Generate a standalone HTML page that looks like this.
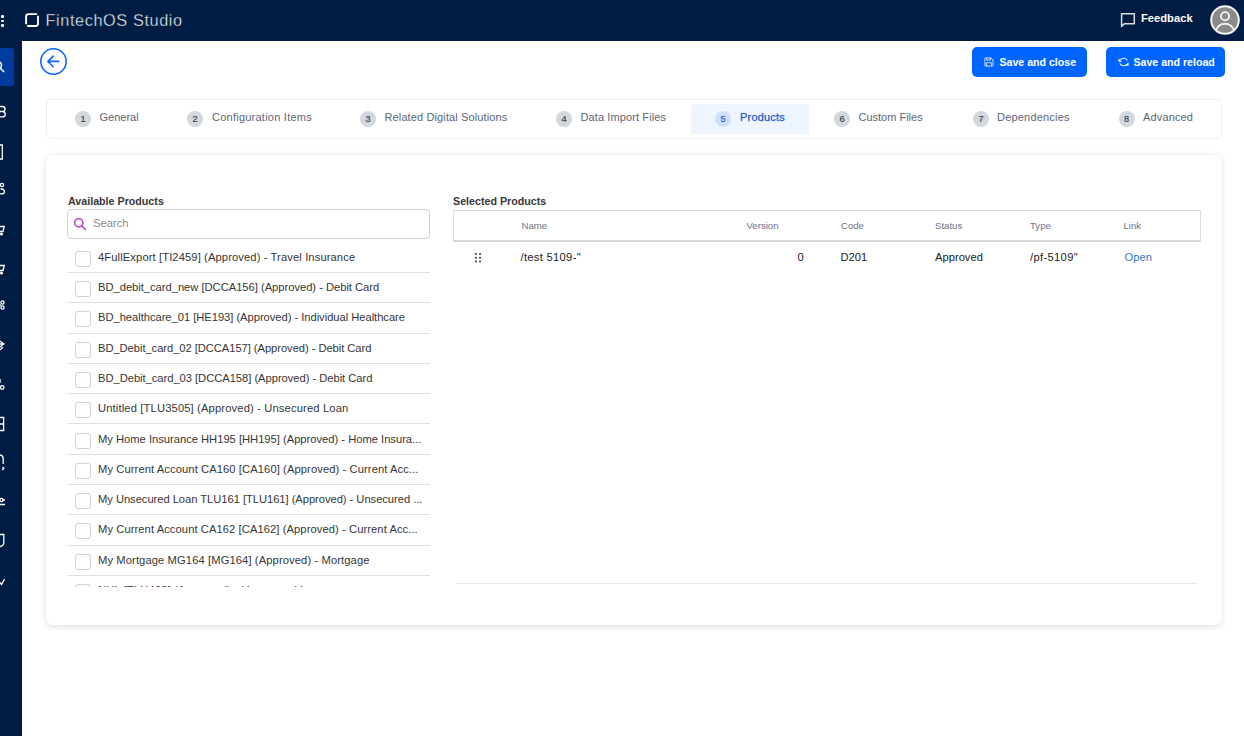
<!DOCTYPE html>
<html><head><meta charset="utf-8">
<style>
*{margin:0;padding:0;box-sizing:border-box}
html,body{width:1244px;height:736px;overflow:hidden;background:#fff;font-family:"Liberation Sans",sans-serif;position:relative}
.a{position:absolute;white-space:nowrap;line-height:1}
#hdr{position:absolute;left:0;top:0;width:1244px;height:41px;background:#001c42}
#side{position:absolute;left:0;top:41px;width:22px;height:695px;background:#001c42}
.title{left:45.5px;top:11.5px;font-size:16.3px;color:#f0f2f6;font-weight:400;letter-spacing:0.6px;-webkit-text-stroke:0.35px #001c42}
.fb{left:1141px;top:13px;font-size:11.2px;color:#fff;font-weight:700}
.btn{position:absolute;top:47px;height:30px;background:#0065ff;border-radius:5px}
.btxt{font-size:10.6px;color:#fff;font-weight:700;top:57px}
.tabs{position:absolute;left:46px;top:99px;width:1176px;height:39.5px;border:1px solid #eceef2;border-radius:5px}
.tact{position:absolute;left:691px;top:104px;width:118px;height:30px;background:#eef5ff;border-radius:4px}
.bdg{position:absolute;top:111px;width:16px;height:16px;border-radius:50%;background:#d3d7de;color:#3c4554;font-size:9.2px;text-align:center;line-height:16.5px;-webkit-text-stroke:0.2px currentColor}
.tt{top:112px;font-size:11px;color:#5b6577}
.card{position:absolute;left:46px;top:155px;width:1176px;height:470px;background:#fff;border-radius:7px;box-shadow:0 1.5px 6px rgba(0,0,0,0.12)}
.lbl{font-size:10.7px;font-weight:700;color:#383838;top:196px}
.search{position:absolute;left:67px;top:209px;width:363px;height:30px;border:1px solid #ccd1dd;border-radius:4px}
.row{position:absolute;left:67px;width:363px;height:30.3px;border-bottom:1px solid #dfe1e6}
.cb{position:absolute;left:8px;top:8px;width:16px;height:16px;border:1px solid #cdd2dd;border-radius:3px;background:#fff}
.rt{position:absolute;left:31px;top:9px;font-size:11.2px;color:#363636;white-space:nowrap;line-height:1}
.th{position:absolute;left:453px;top:209.5px;width:748px;height:32px;border:1px solid #dedfe2;border-top:1.5px solid #d8d9dc;border-bottom:2px solid #d8d9dc}
.hc{top:221px;font-size:9.6px;color:#6b7489}
.dc{top:252px;font-size:11.2px;color:#222}
</style></head><body>
<div id="hdr"></div>
<div id="side"></div>

<!-- header -->
<div class="a" style="left:1.4px;top:15.3px;width:2.9px;height:2.9px;background:#fff;border-radius:1px"></div>
<div class="a" style="left:1.4px;top:19.6px;width:2.9px;height:2.9px;background:#fff;border-radius:1px"></div>
<div class="a" style="left:1.4px;top:23.9px;width:2.9px;height:2.9px;background:#fff;border-radius:1px"></div>
<svg class="a" style="left:24px;top:12px" width="16" height="16" viewBox="0 0 16 16">
 <path d="M2.1 12.3 V4.6 a2.5 2.5 0 0 1 2.5 -2.5 H13.0" fill="none" stroke="#fff" stroke-width="1.9"/>
 <path d="M14 3.7 V11.5 a2.5 2.5 0 0 1 -2.5 2.5 H3.2" fill="none" stroke="#fff" stroke-width="1.9"/>
</svg>
<div class="a title">FintechOS Studio</div>

<svg class="a" style="left:1120px;top:12px" width="16" height="16" viewBox="0 0 16 16">
 <path d="M1.6 1.8 H14.3 V11.8 H4.4 L1.6 14.5 Z" fill="none" stroke="#dcdcdc" stroke-width="1.5" stroke-linejoin="round"/>
</svg>
<div class="a fb">Feedback</div>
<svg class="a" style="left:1210px;top:5px" width="30" height="30" viewBox="0 0 30 30">
 <circle cx="15" cy="15" r="13.8" fill="#8a8a8a" stroke="#f2f2f2" stroke-width="2"/>
 <circle cx="15" cy="11.2" r="4.1" fill="none" stroke="#f2f2f2" stroke-width="1.9"/>
 <path d="M6.2 24.8 C8 20.5 11.5 18.8 15 18.8 C18.5 18.8 22 20.5 23.8 24.8" fill="none" stroke="#f2f2f2" stroke-width="1.9"/>
</svg>

<!-- sidebar -->
<div class="a" style="left:0;top:48px;width:14px;height:38px;background:#003c9e;border-radius:0 3px 3px 0"></div>
<svg class="a" style="left:0;top:60px" width="8" height="14" viewBox="0 0 8 14">
 <circle cx="-1.8" cy="5.2" r="3.3" fill="none" stroke="#fff" stroke-width="1.5"/>
 <path d="M0.6 8.4 L3.6 11.6" stroke="#fff" stroke-width="1.5" stroke-linecap="round"/>
</svg>
<svg class="a" style="left:0;top:100px" width="8" height="500" viewBox="0 0 8 500">
<g fill="none" stroke="#fff" stroke-width="1.3">
 <!-- 111 : stacked -->
 <path d="M0 6.5 H2.5 a2.5 2.5 0 0 1 0 5 H0 M0 11.5 H2.5 a2.7 2.7 0 0 1 0 5.4 H0"/>
 <!-- 152 : bracket -->
 <path d="M0 45 H2.3 V59 H0"/>
 <!-- 191 : nodes -->
 <circle cx="2" cy="85" r="1.6"/><path d="M0.5 89 H2 a2.4 2.4 0 0 1 0 4.8 H0"/>
 <!-- 230 cart -->
 <path d="M0 126.5 H4.2 L3 131.5 H0"/><circle cx="1.5" cy="134" r="0.9" fill="#fff"/>
 <!-- 269 cart -->
 <path d="M0 165.5 H4.2 L3 170.5 H0"/><circle cx="1.5" cy="173" r="0.9" fill="#fff"/>
 <!-- 307 hierarchy -->
 <circle cx="2.5" cy="202.5" r="1.6"/><circle cx="2.5" cy="207.5" r="1.6"/><path d="M0 205 H1"/>
 <!-- 346 gear -->
 <path d="M0 241 L3.5 244 L0 247 M0 244 H4.5 M0 250 L3 247"/>
 <!-- 385 circle -->
 <path d="M0 279 V283"/><circle cx="2.2" cy="287.5" r="1.8"/>
 <!-- 424 table -->
 <path d="M0 317.5 H3.6 V330.5 H0 M0 324 H3.6"/>
 <!-- 462 arc -->
 <path d="M0 355 a3.5 3.5 0 0 1 3.2 3.5 V364 M2.6 367 L3.8 368.5 L2.2 370"/>
 <!-- 500 slider -->
 <circle cx="1.4" cy="400" r="1.6"/><path d="M3 400 H5 M0 404.5 H5"/>
 <!-- 539 shield -->
 <path d="M0 434.5 H3.8 V442 a4 4 0 0 1 -3.8 4.5"/>
 <!-- 580 check -->
 <path d="M0 482.5 L1.5 484.5 L4.5 479"/>
</g>
</svg>

<!-- back button -->
<svg class="a" style="left:39px;top:47px" width="29" height="29" viewBox="0 0 29 29">
 <circle cx="14.5" cy="14.5" r="12.7" fill="none" stroke="#0a66ff" stroke-width="1.6"/>
 <path d="M8.9 14.4 H19.6 M14.2 9.1 L8.9 14.4 L14.2 19.7" fill="none" stroke="#0a66ff" stroke-width="1.6" stroke-linecap="round" stroke-linejoin="round"/>
</svg>

<!-- buttons -->
<div class="btn" style="left:972px;width:115px"></div>
<svg class="a" style="left:984px;top:57px" width="10" height="10" viewBox="0 0 11 11">
 <path d="M1 1.8 a0.8 0.8 0 0 1 .8 -.8 H7.6 L10 3.4 V9.2 a0.8 0.8 0 0 1 -.8 .8 H1.8 a0.8 0.8 0 0 1 -.8 -.8 Z" fill="none" stroke="#dfe9ff" stroke-width="1"/>
 <path d="M3 1 V3.4 H7 V1 M2.6 10 V6.3 H8.4 V10" fill="none" stroke="#dfe9ff" stroke-width="1"/>
</svg>
<div class="a btxt" style="left:999.5px">Save and close</div>
<div class="btn" style="left:1106px;width:119px"></div>
<svg class="a" style="left:1117.5px;top:56.5px" width="11" height="11" viewBox="0 0 11 11">
 <path d="M2.4 2.9 A4.1 4.1 0 0 1 9.3 3.4 M1.9 6.6 A4.1 4.1 0 0 0 8.6 7.4" fill="none" stroke="#eef3ff" stroke-width="1.1"/>
 <path d="M0.4 1.2 V4.8 H4 Z M10.6 5.2 V8.8 H7 Z" fill="#eef3ff"/>
</svg>
<div class="a btxt" style="left:1133.5px">Save and reload</div>

<!-- tabs -->
<div class="tabs"></div>
<div class="tact"></div>
<div class="bdg" style="left:75px">1</div><div class="a tt" style="left:99.5px">General</div>
<div class="bdg" style="left:187px">2</div><div class="a tt" style="left:212px;letter-spacing:0.24px">Configuration Items</div>
<div class="bdg" style="left:360px">3</div><div class="a tt" style="left:384.5px;letter-spacing:0.125px">Related Digital Solutions</div>
<div class="bdg" style="left:556px">4</div><div class="a tt" style="left:580.5px;letter-spacing:0.11px">Data Import Files</div>
<div class="bdg" style="left:715px;background:#cfe0fc;color:#1d5fcc">5</div><div class="a tt" style="left:740px;color:#1c5bc6;-webkit-text-stroke:0.25px #1c5bc6;letter-spacing:0.2px">Products</div>
<div class="bdg" style="left:834px">6</div><div class="a tt" style="left:858.5px">Custom Files</div>
<div class="bdg" style="left:973px">7</div><div class="a tt" style="left:997px;letter-spacing:0.2px">Dependencies</div>
<div class="bdg" style="left:1118.5px">8</div><div class="a tt" style="left:1143px;letter-spacing:0.15px">Advanced</div>

<!-- card -->
<div class="card"></div>
<div class="a lbl" style="left:68px">Available Products</div>
<div class="search"></div>
<svg class="a" style="left:73px;top:217px" width="14" height="14" viewBox="0 0 14 14">
 <circle cx="5.8" cy="5.8" r="4.1" fill="none" stroke="#c254d4" stroke-width="1.7"/>
 <path d="M8.8 8.8 L12.3 12.3" stroke="#c254d4" stroke-width="1.8" stroke-linecap="round"/>
</svg>
<div class="a" style="left:93px;top:218px;font-size:11.2px;color:#8b8b8b">Search</div>

<div id="list" style="position:absolute;left:0;top:0;width:440px;height:587px;overflow:hidden">
<div class="row" style="top:242.58px"><div class="cb"></div><div class="rt" style="letter-spacing:0.108px">4FullExport [TI2459] (Approved) - Travel Insurance</div></div>
<div class="row" style="top:272.90px"><div class="cb"></div><div class="rt" style="letter-spacing:-0.022px">BD_debit_card_new [DCCA156] (Approved) - Debit Card</div></div>
<div class="row" style="top:303.22px"><div class="cb"></div><div class="rt" style="letter-spacing:-0.036px">BD_healthcare_01 [HE193] (Approved) - Individual Healthcare</div></div>
<div class="row" style="top:333.54px"><div class="cb"></div><div class="rt" style="letter-spacing:-0.055px">BD_Debit_card_02 [DCCA157] (Approved) - Debit Card</div></div>
<div class="row" style="top:363.86px"><div class="cb"></div><div class="rt" style="letter-spacing:-0.035px">BD_Debit_card_03 [DCCA158] (Approved) - Debit Card</div></div>
<div class="row" style="top:394.18px"><div class="cb"></div><div class="rt" style="letter-spacing:0.144px">Untitled [TLU3505] (Approved) - Unsecured Loan</div></div>
<div class="row" style="top:424.50px"><div class="cb"></div><div class="rt" style="letter-spacing:-0.01px">My Home Insurance HH195 [HH195] (Approved) - Home Insura...</div></div>
<div class="row" style="top:454.82px"><div class="cb"></div><div class="rt" style="letter-spacing:0.088px">My Current Account CA160 [CA160] (Approved) - Current Acc...</div></div>
<div class="row" style="top:485.14px"><div class="cb"></div><div class="rt" style="letter-spacing:-0.042px">My Unsecured Loan TLU161 [TLU161] (Approved) - Unsecured ...</div></div>
<div class="row" style="top:515.46px"><div class="cb"></div><div class="rt" style="letter-spacing:0.076px">My Current Account CA162 [CA162] (Approved) - Current Acc...</div></div>
<div class="row" style="top:545.78px"><div class="cb"></div><div class="rt" style="letter-spacing:0.102px">My Mortgage MG164 [MG164] (Approved) - Mortgage</div></div>
<div class="row" style="top:576.10px"><div class="cb"></div><div class="rt" style="letter-spacing:0.15px">NUL [TLU408] (Approved) - Unsecured Loan</div></div>
</div>

<!-- selected products -->
<div class="a lbl" style="left:453px">Selected Products</div>
<div class="th"></div>
<div class="a hc" style="left:521.5px">Name</div>
<div class="a hc" style="left:746.5px">Version</div>
<div class="a hc" style="left:841px">Code</div>
<div class="a hc" style="left:935px">Status</div>
<div class="a hc" style="left:1030px">Type</div>
<div class="a hc" style="left:1123.5px">Link</div>

<svg class="a" style="left:474px;top:252px" width="8" height="12" viewBox="0 0 8 12">
 <g fill="#333"><circle cx="2" cy="2" r="1"/><circle cx="6" cy="2" r="1"/><circle cx="2" cy="5.8" r="1"/><circle cx="6" cy="5.8" r="1"/><circle cx="2" cy="9.6" r="1"/><circle cx="6" cy="9.6" r="1"/></g>
</svg>
<div class="a dc" style="left:520.5px;letter-spacing:0.3px">/test 5109-"</div>
<div class="a dc" style="left:797.5px">0</div>
<div class="a dc" style="left:840.5px">D201</div>
<div class="a dc" style="left:935px">Approved</div>
<div class="a dc" style="left:1030px;letter-spacing:0.33px">/pf-5109"</div>
<div class="a dc" style="left:1124.5px;color:#2f79c6">Open</div>

<div class="a" style="left:456px;top:583px;width:741px;height:1px;background:#e4e5ee"></div>

</body></html>
